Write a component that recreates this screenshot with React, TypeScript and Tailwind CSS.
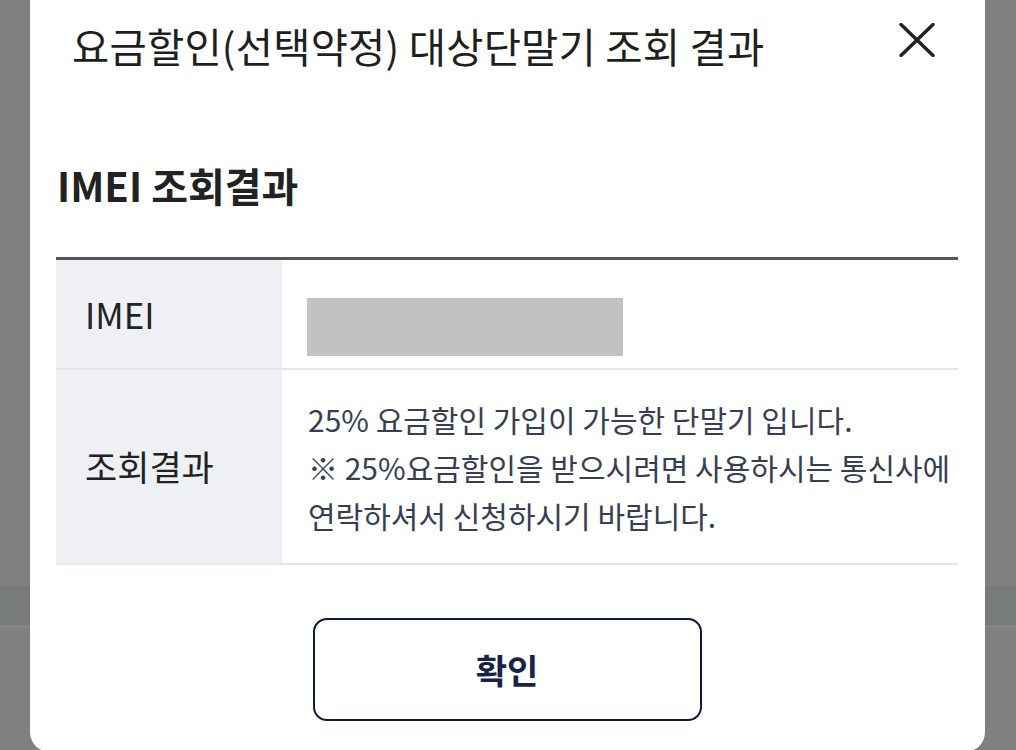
// Phone modal: 요금할인 대상단말기 조회 결과

const FONT = { fontFamily: '"Noto Sans CJK KR", "Noto Sans", sans-serif' };

function CloseIcon() {
  return (
    <svg width="36" height="34" viewBox="0 0 36 34" fill="none">
      <path d="M2 1.5 L34 32.5 M34 1.5 L2 32.5" stroke="#222" strokeWidth="3.4" strokeLinecap="round" />
    </svg>
  );
}

export default function App() {
  return (
    <div className="relative w-[1016px] h-[750px] overflow-hidden bg-[#808080]" style={FONT}>
      {/* page behind the dim layer */}
      <div className="mt-[586px] h-[39px] bg-[#787b7c]" />
      <div className="h-[3px] bg-[#858585]" />

      {/* modal */}
      <div className="absolute left-[30px] top-[-20px] w-[955px] h-[772px] rounded-[20px] bg-white">
        <div className="flex items-start justify-between pt-[42px] pl-[42px] pr-[50px]">
          <h1 className="text-[40.5px] leading-[48px] font-normal text-[#1f1f1f] tracking-[0.2px]">
            요금할인(선택약정) 대상단말기 조회 결과
          </h1>
          <button className="mt-[1px]">
            <CloseIcon />
          </button>
        </div>

        <div className="px-[26px] pr-[27px]">
          <h2 className="mt-[91px] text-[40px] leading-[48px] font-bold text-[#222] pl-[1px]">IMEI 조회결과</h2>

          <div className="mt-[48px] border-t-[3px] border-[#555]">
            <div className="flex h-[110px] border-b-2 border-[#e4e6e9]">
              <div className="w-[226px] bg-[#eef0f3] flex items-center pl-[29px] text-[35px] text-[#222]">IMEI</div>
              <div className="flex-1 pl-[25px] pt-[38px]">
                <div className="w-[316px] h-[58px] bg-[#c2c2c2]" />
              </div>
            </div>
            <div className="flex h-[195px] border-b-2 border-[#e4e6e9]">
              <div className="w-[226px] bg-[#eef0f3] flex items-center pl-[29px] text-[35px] text-[#222]">조회결과</div>
              <div className="flex-1 flex flex-col justify-center pl-[26px] text-[30px] leading-[48px] text-[#383e52]">
                <p>25% 요금할인 가입이 가능한 단말기 입니다.</p>
                <p>※ 25%요금할인을 받으시려면 사용하시는 통신사에</p>
                <p>연락하셔서 신청하시기 바랍니다.</p>
              </div>
            </div>
          </div>

          <div className="flex justify-center mt-[53px]">
            <button className="w-[389px] h-[103px] rounded-[14px] border-[2.5px] border-[#0d1b3e] text-[34px] font-bold text-[#16244a]">
              확인
            </button>
          </div>
        </div>
      </div>
    </div>
  );
}
